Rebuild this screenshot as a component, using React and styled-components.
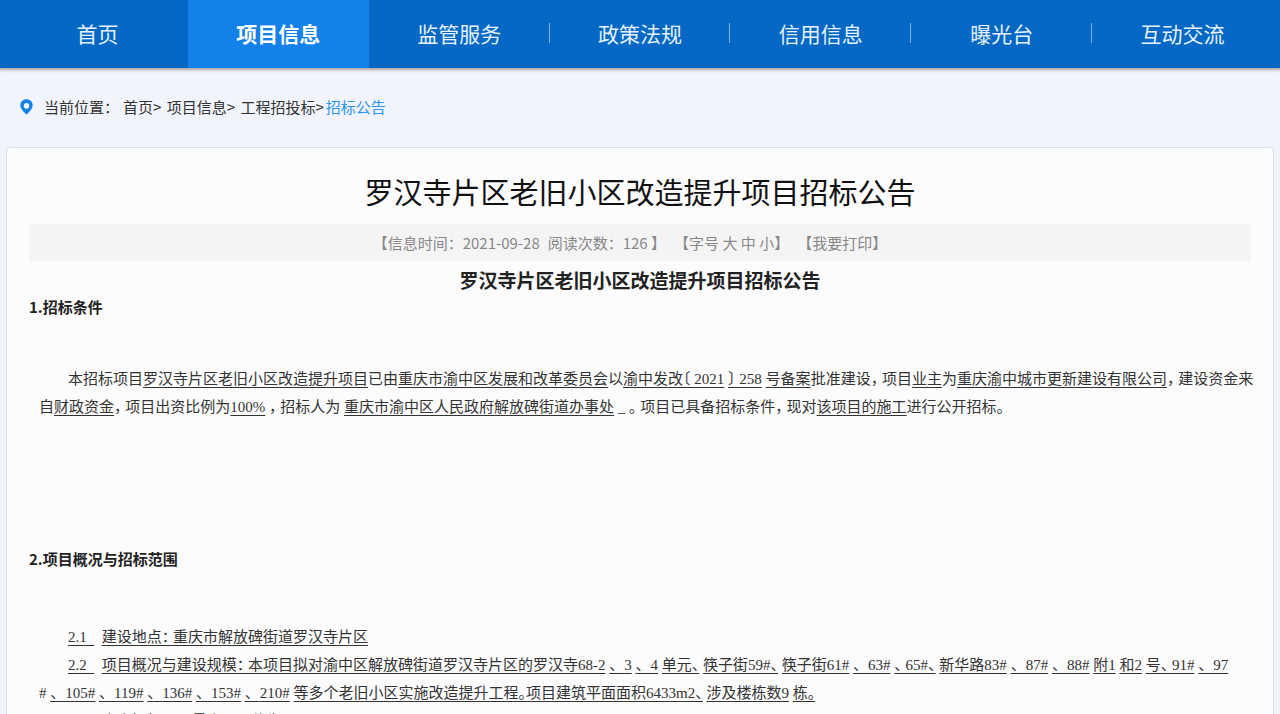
import { Fragment } from 'react'
import styled, { createGlobalStyle, css } from 'styled-components'

const menu = [
  { name: '首页' },
  { name: '项目信息', active: true },
  { name: '监管服务', line: true },
  { name: '政策法规', line: true },
  { name: '信用信息', line: true },
  { name: '曝光台', line: true },
  { name: '互动交流' },
]

const crumbs = ['首页> ', '项目信息> ', '工程招投标>']

// second line of 2.2: house numbers, each one underlined on its own
const houses = ['105#', '119#', '136#', '153#', '210#']

export default function App() {
  return (
    <>
      <GlobalStyle />
      <Nav>
        {menu.map(({ name, active, line }) => (
          <NavLink key={name} href="#" $active={active} $line={line}>
            {name}
          </NavLink>
        ))}
      </Nav>
      <Breadcrumb>
        <PinIcon viewBox="0 0 13 16">
          <path
            fill="#1283ea"
            fillRule="evenodd"
            d="M6.500 0.300C3 0.300 0.300 2.900 0.300 6.300C0.300 10 3.600 12.600 6.500 15.700C9.400 12.600 12.700 10 12.700 6.300C12.700 2.900 10 0.300 6.500 0.300ZM6.500 3.900A2.700 2.900 0 1 1 6.500 9.700A2.700 2.900 0 1 1 6.500 3.900Z"
          />
        </PinIcon>
        <CrumbLabel>当前位置：</CrumbLabel>
        {crumbs.map((crumb) => (
          <CrumbLink key={crumb} href="#">
            {crumb}
          </CrumbLink>
        ))}
        <CrumbLink href="#" $current>
          招标公告
        </CrumbLink>
      </Breadcrumb>
      <Card>
        <Title>罗汉寺片区老旧小区改造提升项目招标公告</Title>
        <Meta>
          <span>【信息时间：2021-09-28</span>
          <span>阅读次数：126 】</span>
          <span>
            【字号 <MetaButton>大</MetaButton> <MetaButton>中</MetaButton>{' '}
            <MetaButton>小</MetaButton>】
          </span>
          <span>
            【<MetaButton>我要打印</MetaButton>】
          </span>
        </Meta>
        <SubTitle>罗汉寺片区老旧小区改造提升项目招标公告</SubTitle>

        <SectionTitle>1.招标条件</SectionTitle>
        <Conditions>
          <Paragraph>
            本招标项目<u>罗汉寺片区老旧小区改造提升项目</u>已由
            <u>重庆市渝中区发展和改革委员会</u>以<u>渝中发改〔 2021</u> <u>〕 258</u>{' '}
            <u>号备案</u>批准建设， 项目<u>业主</u>为
            <u>重庆渝中城市更新建设有限公司</u>， 建设资金来
            <br />自<u>财政资金</u>， 项目出资比例为<u>100%</u> ， 招标人为{' '}
            <u>重庆市渝中区人民政府解放碑街道办事处</u> _ 。 项目已具备招标条件， 现对
            <u>该项目的施工</u>进行公开招标。
          </Paragraph>
        </Conditions>

        <SectionTitle>2.项目概况与招标范围</SectionTitle>
        <Scope>
          <Paragraph>
            <u>2.1&nbsp;&nbsp;</u>&nbsp; <u>建设地点： 重庆市解放碑街道罗汉寺片区</u>
          </Paragraph>
          <Paragraph>
            <u>2.2&nbsp;&nbsp;</u>&nbsp;{' '}
            <u>项目概况与建设规模： 本项目拟对渝中区解放碑街道罗汉寺片区的罗汉寺68-2</u>{' '}
            <u>、&nbsp; 3</u> <u>、&nbsp; 4</u> <u>单元、</u> <u>筷子街59#、</u>{' '}
            <u>筷子街61#</u> <u>、&nbsp; 63#</u> <u>、 65#、</u>{' '}
            <u>新华路83#</u> <u>、&nbsp; 87#</u> <u>、&nbsp; 88#</u> <u>附1</u>{' '}
            <u>和2</u> <u>号、 91#</u> <u>、&nbsp; 97</u>
            <br />#
            {houses.map((house) => (
              <Fragment key={house}>
                {' '}
                <u>、&nbsp; {house}</u>
              </Fragment>
            ))}{' '}
            <u>等多个老旧小区实施改造提升工程。项目建筑平面面积6433m2、</u>{' '}
            <u>涉及楼栋数9</u> <u>栋。</u>
          </Paragraph>
          <Paragraph>
            2.3&nbsp;&nbsp;&nbsp; 本次招标项目最高限价约为1000万元
          </Paragraph>
        </Scope>
      </Card>
    </>
  )
}

const GlobalStyle = createGlobalStyle`
  * {
    box-sizing: border-box;
  }
  html {
    height: 100%;
    overflow: hidden;
  }
  body {
    margin: 0;
    background: #f1f4fc;
    color: #333;
    font-family: 'Noto Sans CJK SC', sans-serif;
    font-size: 15px;
  }
`

const Nav = styled.nav`
  display: flex;
  height: 68px;
  padding: 0 7px;
  background: #0568c5;
  box-shadow: 0 1px 3px 1px #a9a3a3;
`

const NavLink = styled.a`
  position: relative;
  flex: 1;
  display: flex;
  align-items: center;
  justify-content: center;
  padding-bottom: 2px;
  color: #e6f3ff;
  font-size: 21px;
  text-decoration: none;
  ${({ $active }) =>
    $active &&
    css`
      background: #1480e9;
      color: #fff;
      font-weight: 700;
    `}
  ${({ $line }) =>
    $line &&
    css`
      &::after {
        content: '';
        position: absolute;
        right: 0;
        width: 1px;
        height: 20px;
        background: #78b4ea;
      }
    `}
`

const Breadcrumb = styled.div`
  display: flex;
  align-items: center;
  height: 79px;
  padding: 0 20px 2px;
  white-space: pre;
`

const PinIcon = styled.svg`
  width: 13px;
  height: 16px;
  margin-right: 11px;
`

const CrumbLabel = styled.span`
  margin-right: 4px;
`

const CrumbLink = styled.a`
  margin-right: 2px;
  color: ${({ $current }) => ($current ? '#2b93f0' : '#333')};
  text-decoration: none;
`

const Card = styled.main`
  margin: 0 6px;
  padding: 20px 22px;
  border: 1px solid #d9deea;
  border-radius: 4px;
  background: #fcfcfd;
`

const Title = styled.h1`
  margin: 0;
  color: #111;
  font-size: 29px;
  font-weight: 400;
  line-height: 46px;
  text-align: center;
`

const Meta = styled.div`
  display: flex;
  justify-content: center;
  gap: 8px;
  margin-top: 10px;
  padding-right: 20px;
  background: #f4f4f5;
  color: #888;
  line-height: 37px;
`

const MetaButton = styled.button`
  padding: 0;
  border: 0;
  background: none;
  color: inherit;
  font: inherit;
  cursor: pointer;
`

const SubTitle = styled.h2`
  margin: 0;
  color: #222;
  font-size: 19px;
  font-weight: 700;
  line-height: 38px;
  text-align: center;
`

const SectionTitle = styled.h3`
  margin: 0;
  color: #222;
  font-size: 15px;
  font-weight: 700;
  line-height: 16px;
`

const Conditions = styled.section`
  padding: 50px 0 130px 10px;
`

const Scope = styled.section`
  padding: 56px 0 20px 10px;
`

const Paragraph = styled.p`
  margin: 0;
  font-family: 'Liberation Serif', 'Noto Sans CJK SC', sans-serif;
  line-height: 28px;
  text-indent: 29px;
  white-space: nowrap;
  font-feature-settings: 'halt';

  u {
    text-underline-offset: 3px;
  }
`
